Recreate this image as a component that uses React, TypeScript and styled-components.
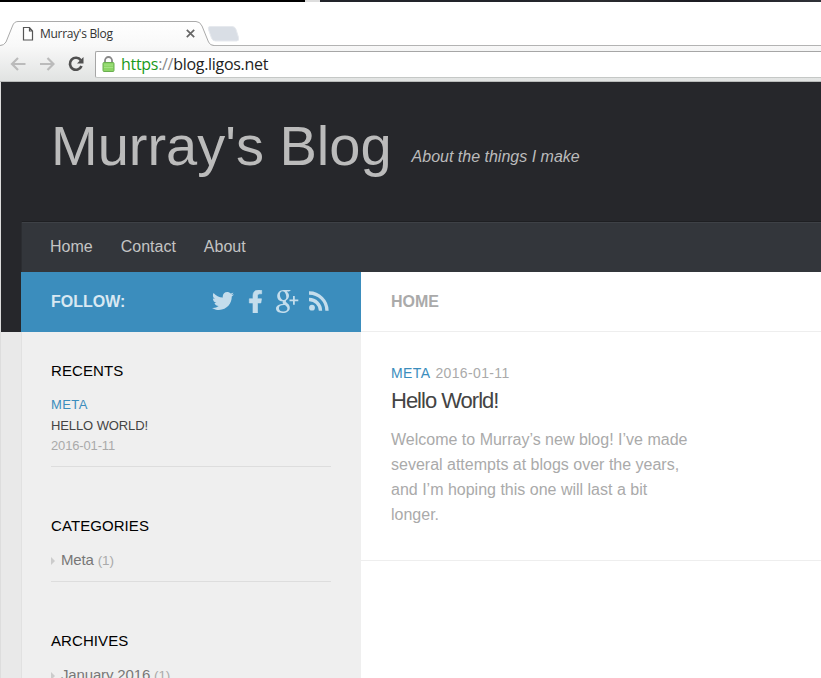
import React from "react";
import styled, { createGlobalStyle } from "styled-components";
import { FaTwitter, FaFacebookF } from "react-icons/fa";

const Global = createGlobalStyle`
  * { box-sizing: border-box; }
  body { margin: 0; overflow: hidden; background: #fff; }
`;

const Window = styled.div`
  display: flex;
  flex-direction: column;
  width: 821px;
  height: 678px;
  overflow: hidden;
  font-family: "Liberation Sans", Arial, sans-serif;
  font-size: 16px;
  color: #aaa;
`;

const Desktop = styled.div`
  height: 2px;
  flex: none;
  background: linear-gradient(90deg, #000 305px, #ddd 305px 320px, #22242a 320px 520px, #2b2c30 600px, #1b1b22 700px, #303238);
`;

const TabStrip = styled.div`
  height: 44px;
  flex: none;
  padding-top: 18px;
  background: #fff;
  border-bottom: 1px solid #b3b3b3;
`;

const TabRow = styled.div`
  position: relative;
  width: 240px;
  height: 26px;
`;

const TabShape = styled.svg`
  position: absolute;
  left: 0;
  top: 0;
`;

const TabContent = styled.div`
  position: relative;
  display: flex;
  align-items: center;
  height: 27px;
  padding-left: 22px;
`;

const TabTitle = styled.span`
  width: 143px;
  margin: 1px 3px 0 6px;
  font: 12px/16px "Open Sans", sans-serif;
  letter-spacing: -0.3px;
  color: #333;
`;

const Toolbar = styled.div`
  height: 36px;
  flex: none;
  display: flex;
  align-items: center;
  padding-left: 10px;
  background: linear-gradient(#f8f8f8, #e1e3e2);
  border-bottom: 1px solid #b9bbba;
`;

const ToolIcon = styled.svg<{ $gap: number }>`
  flex: none;
  margin-right: ${(p) => p.$gap}px;
`;

const AddressBar = styled.div`
  flex: 1;
  display: flex;
  align-items: center;
  height: 27px;
  margin-top: 1px;
  padding-left: 6px;
  background: #fff;
  border: 1px solid #a6a6a6;
  border-bottom-color: #c5c8c6;
  border-right: 0;
  border-radius: 2px 0 0 2px;
`;

const Url = styled.span`
  margin-left: 6px;
  font: 16px/22px "Open Sans", sans-serif;
  letter-spacing: -0.3px;
  color: #222;
`;
const Scheme = styled.span`color: #1a9a1a;`;
const Slashes = styled.span`color: #888;`;

const Page = styled.div`
  flex: 1;
  display: grid;
  grid-template-columns: 20px 1fr;
  min-height: 0;
  border-left: 1px solid #ddd;
  background: linear-gradient(#26272b 250px, #e9e9e9 250px);
`;

const Site = styled.div`
  grid-column: 2;
  display: flex;
  flex-direction: column;
  min-height: 0;
`;

const Header = styled.header`
  height: 139px;
  flex: none;
  display: flex;
  padding-left: 30px;
`;

const SiteTitle = styled.h1`
  margin: 32px 20px 0 0;
  font-size: 56px;
  line-height: 64px;
  font-weight: 400;
  color: #bbb;
`;

const Tagline = styled.span`
  margin-top: 65px;
  line-height: 20px;
  font-style: italic;
  color: #bbb;
`;

const Nav = styled.nav`
  height: 51px;
  flex: none;
  display: flex;
  gap: 28px;
  padding: 15px 0 0 28px;
  line-height: 20px;
  color: #c4c4c4;
  background: #33363b;
  border-top: 1px solid #1e1f22;
  border-left: 1px solid #2b2d31;
  box-shadow: inset 0 1px #3e4146;
`;

const Columns = styled.div`
  flex: 1;
  display: grid;
  grid-template-columns: 340px 1fr;
  min-height: 0;
`;

const Sidebar = styled.aside`
  min-height: 0;
  overflow: hidden;
  background: #efefef;
`;

const FollowBar = styled.div`
  height: 60px;
  display: flex;
  align-items: center;
  padding: 0 32px 0 30px;
  font-weight: 700;
  color: #d8e8f2;
  background: #3b8dbd;
`;

const Social = styled.div`
  display: flex;
  align-items: center;
  margin: -2px 0 0 auto;
  color: #c4ddec;
`;

const TwitterIcon = styled(FaTwitter)`width: 22px; height: 22px; margin-right: 14px;`;
const FacebookIcon = styled(FaFacebookF)`width: 15px; height: 23px; margin-right: 12px; stroke: currentColor; stroke-width: 14px;`;
const SocialSvg = styled.svg<{ $gap: number }>`margin-right: ${(p) => p.$gap}px;`;

const Widgets = styled.div`
  height: 346px;
  padding: 29px 30px 0 29px;
  border-left: 1px solid #e1e1e1;
`;

const Widget = styled.section<{ $height: number }>`
  height: ${(p) => p.$height}px;
`;

const WidgetTitle = styled.h3`
  margin: 0 0 14px;
  font-size: 15px;
  line-height: 20px;
  font-weight: 400;
  letter-spacing: 0.08px;
  color: #000;
`;

const RecentItem = styled.div`
  height: 72px;
  font-size: 13px;
  line-height: 20.5px;
  border-bottom: 1px solid #ddd;
`;

const Line = styled.div<{ $color: string; $spacing: number }>`
  color: ${(p) => p.$color};
  letter-spacing: ${(p) => p.$spacing}px;
`;

const ListItem = styled.div`
  height: 32px;
  display: flex;
  align-items: flex-start;
  font-size: 15px;
  line-height: 20px;
  letter-spacing: -0.15px;
  color: #777;
  border-bottom: 1px solid #ddd;
`;

const Caret = styled.span`
  margin: 7px 6px 0 0;
  border: 4px solid transparent;
  border-left-color: #ccc;
  border-right: 0;
`;

const Count = styled.span`
  margin-left: 4px;
  font-size: 13.5px;
  line-height: 21px;
  color: #aaa;
`;

const Main = styled.main`
  background: #fff;
`;

const PageTitle = styled.div`
  height: 60px;
  padding: 20px 30px 19px;
  line-height: 20px;
  font-weight: 700;
  color: #aaa;
  border-bottom: 1px solid #eee;
`;

const Post = styled.article`
  height: 229px;
  padding: 31px 30px 0;
  border-bottom: 1px solid #eee;
`;

const PostMeta = styled.div`
  display: flex;
  gap: 5px;
  font-size: 14px;
  line-height: 20px;
`;

const PostTitle = styled.h2`
  margin: 5px 0 13px;
  font-size: 22px;
  line-height: 26px;
  font-weight: 400;
  letter-spacing: -1px;
  color: #444;
`;

const Excerpt = styled.p`
  width: 305px;
  margin: 0;
  line-height: 25px;
`;

export default function App() {
  return (
    <>
      <Global />
      <Window>
        <Desktop />
        <TabStrip>
          <TabRow>
            <TabShape width="242" height="27" viewBox="0 0 242 27">
              <defs>
                <linearGradient id="tab" x1="0" y1="0" x2="0" y2="1">
                  <stop offset="0" stopColor="#fff" />
                  <stop offset="1" stopColor="#f8f8f8" />
                </linearGradient>
              </defs>
              <path d="M210 6.500h22q3 0 4 3l2.500 8q1 3.500-2 3.500h-21q-3 0-4-3l-3-8.500q-1-3 1.500-3z" fill="#d9dee5" stroke="#e6e9ee" />
              <path d="M0 25.500Q4 25.500 6 22L12.500 6Q14 1.500 18 1.500H196Q200 1.500 202 6L208.500 22Q210 25.500 214 25.500V27H0z" fill="url(#tab)" />
              <path d="M0 25.500Q4 25.500 6 22L12.500 6Q14 1.500 18 1.500H196Q200 1.500 202 6L208.500 22Q210 25.500 214 25.500" fill="none" stroke="#aaa" />
            </TabShape>
            <TabContent>
              <svg width="12" height="15" viewBox="0 0 12 15" fill="#fff" stroke="#555" strokeWidth="1.200">
                <path d="M1.500 1.500h6l3 3.500v9h-9zM7.500 1.500v3.500h3" />
              </svg>
              <TabTitle>Murray's Blog</TabTitle>
              <svg width="9" height="9" viewBox="0 0 9 9" stroke="#666" strokeWidth="1.700">
                <path d="M.8.8l7.400 7.400M8.200.8L.8 8.200" />
              </svg>
            </TabContent>
          </TabRow>
        </TabStrip>
        <Toolbar>
          <ToolIcon $gap={13} width="16" height="14" viewBox="0 0 16 14" fill="none" stroke="#bbb" strokeWidth="2.200">
            <path d="M15.500 7H2M8 1L2 7l6 6" />
          </ToolIcon>
          <ToolIcon $gap={13} width="16" height="14" viewBox="0 0 16 14" fill="none" stroke="#bbb" strokeWidth="2.200">
            <path d="M1 7H14.500M8.500 1l6 6-6 6" />
          </ToolIcon>
          <ToolIcon $gap={11} width="16" height="16" viewBox="0 0 16 16">
            <path d="M12.800 4.200A6 6 0 1 0 13.500 10" fill="none" stroke="#505050" strokeWidth="2.700" />
            <path d="M15.500 1v6.500H9z" fill="#505050" />
          </ToolIcon>
          <AddressBar>
            <svg width="13" height="16" viewBox="0 0 13 16">
              <path d="M3 8V4.500a3.300 3.300 0 0 1 7 0V8" fill="none" stroke="#888" strokeWidth="1.800" />
              <rect x="1" y="6.500" width="11" height="9" rx="1" fill="#8cd566" stroke="#6aae50" />
              <path d="M2 9h9M2 11.500h9" stroke="#a5e285" />
            </svg>
            <Url><Scheme>https</Scheme><Slashes>://</Slashes>blog.ligos.net</Url>
          </AddressBar>
        </Toolbar>
        <Page>
          <Site>
            <Header>
              <SiteTitle>Murray's Blog</SiteTitle>
              <Tagline>About the things I make</Tagline>
            </Header>
            <Nav><span>Home</span><span>Contact</span><span>About</span></Nav>
            <Columns>
              <Sidebar>
                <FollowBar>
                  FOLLOW:
                  <Social>
                    <TwitterIcon />
                    <FacebookIcon />
                    <SocialSvg $gap={10} width="24" height="25" viewBox="0 0 24 25" fill="currentColor">
                      <path fillRule="evenodd" d="M8.500 1H16l-2 1.500h-2.300c1.600 1.200 2.300 2.600 2.300 4.300 0 2-1 3.200-2.400 4.300-1 .8-1.100 1.600-.1 2.400 2.100 1.600 3.300 2.900 3.300 5.200 0 3.200-3 5.300-7.300 5.300C3.300 24 1 22.300 1 19.600c0-2.900 3-4.600 7.300-4.900-.7-.8-.9-1.600-.5-2.400C4.600 12.500 2.200 10.300 2.200 7.200 2.200 3.800 4.900 1 8.500 1zM7.600 2.200c-1.700 0-2.700 1.400-2.700 3.300 0 2.800 1.500 5.500 3.800 5.500 1.700 0 2.600-1.200 2.600-3 0-2.700-1.400-5.800-3.700-5.800zM9 16c-3.200 0-5.100 1.200-5.100 3.200s1.700 3.300 4.500 3.300c2.500 0 4-1.100 4-2.900 0-1.500-1-2.300-2.600-3.500z" />
                      <path d="M18 7h1.800v3.500h3.500v1.800h-3.500v3.500H18v-3.500h-3.500v-1.800H18z" />
                    </SocialSvg>
                    <SocialSvg $gap={0} width="20" height="20" viewBox="0 0 20 20" fill="none" stroke="currentColor" strokeWidth="3.300">
                      <circle cx="3" cy="16.700" r="2.900" fill="currentColor" stroke="none" />
                      <path d="M0 8.500A11.300 11.300 0 0 1 11.500 19.700M0 2A17.800 17.800 0 0 1 18 19.700" />
                    </SocialSvg>
                  </Social>
                </FollowBar>
                <Widgets>
                  <Widget $height={155}>
                    <WidgetTitle>RECENTS</WidgetTitle>
                    <RecentItem>
                      <Line $color="#3b8dbd" $spacing={0.4}>META</Line>
                      <Line $color="#444" $spacing={-0.1}>HELLO WORLD!</Line>
                      <Line $color="#aaa" $spacing={-0.15}>2016-01-11</Line>
                    </RecentItem>
                  </Widget>
                  <Widget $height={115}>
                    <WidgetTitle>CATEGORIES</WidgetTitle>
                    <ListItem><Caret />Meta<Count>(1)</Count></ListItem>
                  </Widget>
                  <Widget $height={115}>
                    <WidgetTitle>ARCHIVES</WidgetTitle>
                    <ListItem><Caret />January 2016<Count>(1)</Count></ListItem>
                  </Widget>
                </Widgets>
              </Sidebar>
              <Main>
                <PageTitle>HOME</PageTitle>
                <Post>
                  <PostMeta>
                    <Line $color="#3b8dbd" $spacing={0.4}>META</Line>
                    <Line $color="#aaa" $spacing={0.35}>2016-01-11</Line>
                  </PostMeta>
                  <PostTitle>Hello World!</PostTitle>
                  <Excerpt>Welcome to Murray’s new blog! I’ve made several attempts at blogs over the years, and I’m hoping this one will last a bit longer.</Excerpt>
                </Post>
              </Main>
            </Columns>
          </Site>
        </Page>
      </Window>
    </>
  );
}
